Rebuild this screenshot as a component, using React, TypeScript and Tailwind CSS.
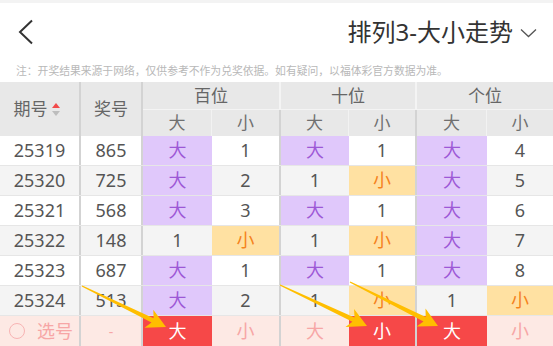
import { Fragment } from 'react';

const FONT = { fontFamily: '"Noto Sans", "Noto Sans CJK SC", sans-serif' };

type Kind = '' | 'p' | 'o' | 'r' | 'm';

const rows: { no: string; num: string; cells: [string, Kind][] }[] = [
  { no: '25319', num: '865', cells: [['大', 'p'], ['1', ''], ['大', 'p'], ['1', ''], ['大', 'p'], ['4', '']] },
  { no: '25320', num: '725', cells: [['大', 'p'], ['2', ''], ['1', ''], ['小', 'o'], ['大', 'p'], ['5', '']] },
  { no: '25321', num: '568', cells: [['大', 'p'], ['3', ''], ['大', 'p'], ['1', ''], ['大', 'p'], ['6', '']] },
  { no: '25322', num: '148', cells: [['1', ''], ['小', 'o'], ['1', ''], ['小', 'o'], ['大', 'p'], ['7', '']] },
  { no: '25323', num: '687', cells: [['大', 'p'], ['1', ''], ['大', 'p'], ['1', ''], ['大', 'p'], ['8', '']] },
  { no: '25324', num: '513', cells: [['大', 'p'], ['2', ''], ['1', ''], ['小', 'o'], ['1', ''], ['小', 'o']] },
];

const picks: [string, Kind][] = [['大', 'r'], ['小', 'm'], ['大', 'm'], ['小', 'r'], ['大', 'r'], ['小', 'm']];

const kindClass: Record<Kind, string> = {
  '': 'text-[#555]',
  p: 'bg-[#e0c8fb] text-[#9d58d6]',
  o: 'bg-[#ffe1a2] text-[#f5831d]',
  r: 'bg-[#f64848] text-white',
  m: 'text-[#f7a6a6]',
};

const cols = 'grid grid-cols-[81px_62px_69px_69px_68px_68px_70px_1fr]';
const thick = 'border-r-2 border-[#d3d3d3]';

// yellow pointer arrows drawn over the last rows
function arrow(sx: number, sy: number, tx: number, ty: number) {
  const dx = tx - sx;
  const dy = ty - sy;
  const l = Math.hypot(dx, dy);
  const ux = dx / l;
  const uy = dy / l;
  const nx = -uy;
  const ny = ux;
  const hl = 19;
  const hw = 10;
  const bx = tx - ux * hl;
  const by = ty - uy * hl;
  const nb = tx - ux * (hl - 4);
  const nby = ty - uy * (hl - 4);
  const p = [
    [sx + nx * 0.6, sy + ny * 0.6],
    [nb + nx * 2.4, nby + ny * 2.4],
    [bx + nx * hw, by + ny * hw],
    [tx, ty],
    [bx - nx * hw, by - ny * hw],
    [nb - nx * 2.4, nby - ny * 2.4],
    [sx - nx * 0.6, sy - ny * 0.6],
  ];
  return p.map(([x, y]) => `${x.toFixed(1)},${y.toFixed(1)}`).join(' ');
}

export default function App() {
  return (
    <div className="relative w-[553px] h-[346px] overflow-hidden bg-white" style={FONT}>
      <div className="h-[3px] bg-[#f3f3f3]" />

      <div className="h-[57px] flex items-center justify-between pl-[18px] pr-[16px]">
        <svg width="16" height="26" viewBox="0 0 16 26" className="mt-[1px]">
          <polyline points="14,1.5 2,13 14,24.5" fill="none" stroke="#333" strokeWidth="2" />
        </svg>
        <div className="flex items-center gap-[7px]">
          <span className="text-[24px] leading-none text-[#333]">排列3-大小走势</span>
          <svg width="17" height="10" viewBox="0 0 17 10" className="mt-[2px]">
            <polyline points="1,1.5 8.5,8.5 16,1.5" fill="none" stroke="#555" strokeWidth="1.3" />
          </svg>
        </div>
      </div>

      <div className="h-[22px] pl-[16px] text-[10.8px] leading-[22px] text-[#b8b8b8] whitespace-nowrap">
        注：开奖结果来源于网络，仅供参考不作为兑奖依据。如有疑问，以福体彩官方数据为准。
      </div>

      {/* table header */}
      <div className={`${cols} grid-rows-[28px_26px] bg-[#e8e8e8] text-[17px] text-[#666]`}>
        <div className={`row-span-2 flex items-center justify-center gap-[4px] pr-[6px] ${thick}`}>
          <span>期号</span>
          <svg width="8" height="13" viewBox="0 0 8 13">
            <polygon points="4,0 8,5 0,5" fill="#f24b4b" />
            <polygon points="0,8 8,8 4,13" fill="#bdbdbd" />
          </svg>
        </div>
        <div className={`row-span-2 flex items-center justify-center ${thick}`}>奖号</div>
        {['百位', '十位', '个位'].map((g, i) => (
          <div
            key={g}
            className={`col-span-2 flex items-center justify-center border-b border-[#f4f4f4] ${i < 2 ? thick : ''}`}
          >
            {g}
          </div>
        ))}
        {[0, 1, 2, 3, 4, 5].map((i) => (
          <div
            key={i}
            className={`flex items-center justify-center text-[#707070] ${
              i % 2 === 0 ? 'border-r border-[#f2f2f2]' : i < 5 ? thick : ''
            }`}
          >
            {i % 2 === 0 ? '大' : '小'}
          </div>
        ))}
      </div>

      {/* data rows */}
      {rows.map((r, ri) => (
        <div
          key={r.no}
          className={`${cols} h-[30px] border-b border-[#e6e6e6] text-[18px] ${ri % 2 === 0 ? 'bg-white' : 'bg-[#f4f4f4]'}`}
        >
          <div className={`flex items-center justify-center text-[#555] ${thick}`}>{r.no}</div>
          <div className={`flex items-center justify-center text-[#555] ${thick}`}>{r.num}</div>
          {r.cells.map(([t, k], i) => (
            <div
              key={i}
              className={`flex items-center justify-center ${kindClass[k]} ${i % 2 === 1 && i < 5 ? thick : ''}`}
            >
              {t}
            </div>
          ))}
        </div>
      ))}

      {/* pick row */}
      <div className={`${cols} h-[30px] bg-[#fde9e4] text-[18px] text-[#f7a6a6]`}>
        <div className={`flex items-center gap-[12px] pl-[9px] ${thick}`}>
          <span className="w-[16px] h-[16px] rounded-full border border-[#f8b4b4]" />
          <span>选号</span>
        </div>
        <div className={`flex items-center justify-center text-[14px] ${thick}`}>-</div>
        {picks.map(([t, k], i) => (
          <Fragment key={i}>
            <div className={`flex items-center justify-center ${kindClass[k]} ${i % 2 === 1 && i < 5 ? thick : ''}`}>
              {t}
            </div>
          </Fragment>
        ))}
      </div>

      <svg className="absolute inset-0 pointer-events-none" width="553" height="346">
        <polygon points={arrow(82, 286, 166, 327)} fill="#ffbe00" />
        <polygon points={arrow(280, 285, 367, 326)} fill="#ffbe00" />
        <polygon points={arrow(350, 282, 438, 326)} fill="#ffbe00" />
      </svg>
    </div>
  );
}
